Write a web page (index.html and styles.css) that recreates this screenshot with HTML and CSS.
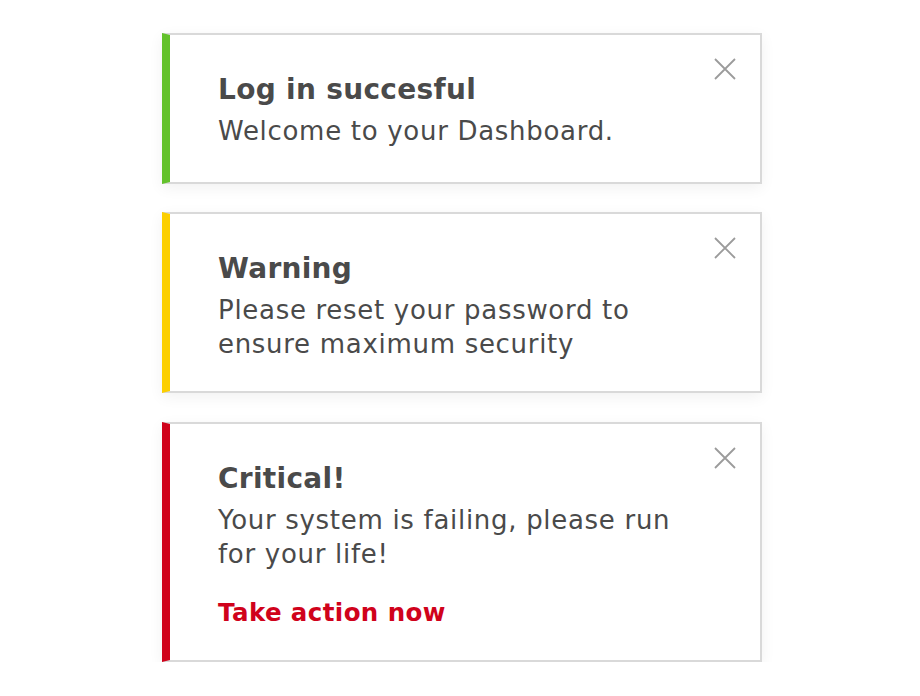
FILE: index.html
```html
<!DOCTYPE html>
<html lang="en">
<head>
<meta charset="utf-8">
<title>Notifications</title>
<link rel="stylesheet" href="styles.css">
</head>
<body>
<main class="stack">
  <section class="note note--success">
    <h2 class="note__title">Log in succesful</h2>
    <p class="note__text">Welcome to your Dashboard.</p>
    <button class="note__close" aria-label="Close">
      <svg viewBox="0 0 22 22" width="22" height="22"><path d="M1 1 L21 21 M21 1 L1 21"/></svg>
    </button>
  </section>
  <section class="note note--warning">
    <h2 class="note__title">Warning</h2>
    <p class="note__text">Please reset your password to ensure maximum security</p>
    <button class="note__close" aria-label="Close">
      <svg viewBox="0 0 22 22" width="22" height="22"><path d="M1 1 L21 21 M21 1 L1 21"/></svg>
    </button>
  </section>
  <section class="note note--critical">
    <h2 class="note__title">Critical!</h2>
    <p class="note__text">Your system is failing, please run for your life!</p>
    <a class="note__action" href="#">Take action now</a>
    <button class="note__close" aria-label="Close">
      <svg viewBox="0 0 22 22" width="22" height="22"><path d="M1 1 L21 21 M21 1 L1 21"/></svg>
    </button>
  </section>
</main>
</body>
</html>
```
FILE: styles.css
```css
html, body {
  margin: 0;
  padding: 0;
  background: #ffffff;
}

body {
  font-family: "DejaVu Sans", "Liberation Sans", sans-serif;
  color: #4a4a4a;
}

.stack {
  display: flex;
  flex-direction: column;
  gap: 28px;
  width: 600px;
  padding: 33px 0 0 162px;
}

.note {
  position: relative;
  box-sizing: border-box;
  width: 600px;
  border: 2px solid #d9d9d9;
  border-left: 8px solid #63c22b;
  background: #ffffff;
  box-shadow: 0 4px 14px rgba(0, 0, 0, 0.06);
  padding: 38px 77px 30px 48px;
}

.note--success {
  border-left-color: #63c22b;
  min-height: 151px;
}

.note--warning {
  border-left-color: #fccf00;
}

.note--critical {
  border-left-color: #d0021b;
  margin-top: 1px;
}

.note__title {
  margin: 0 0 7px;
  font-size: 28px;
  line-height: 34px;
  font-weight: 700;
  letter-spacing: 0.3px;
  color: #4a4a4a;
}

.note__text {
  margin: 0;
  font-size: 26px;
  line-height: 34px;
  letter-spacing: 0.7px;
  font-weight: 400;
}

.note__action {
  display: block;
  margin-top: 25px;
  font-size: 24.5px;
  line-height: 34px;
  font-weight: 700;
  letter-spacing: 0.4px;
  color: #d0021b;
  text-decoration: none;
}

.note__close {
  position: absolute;
  top: 23px;
  right: 24px;
  width: 22px;
  height: 22px;
  padding: 0;
  border: 0;
  background: transparent;
  cursor: pointer;
}

.note__close svg {
  display: block;
  fill: none;
  stroke: #9b9b9b;
  stroke-width: 1.8;
}
```
